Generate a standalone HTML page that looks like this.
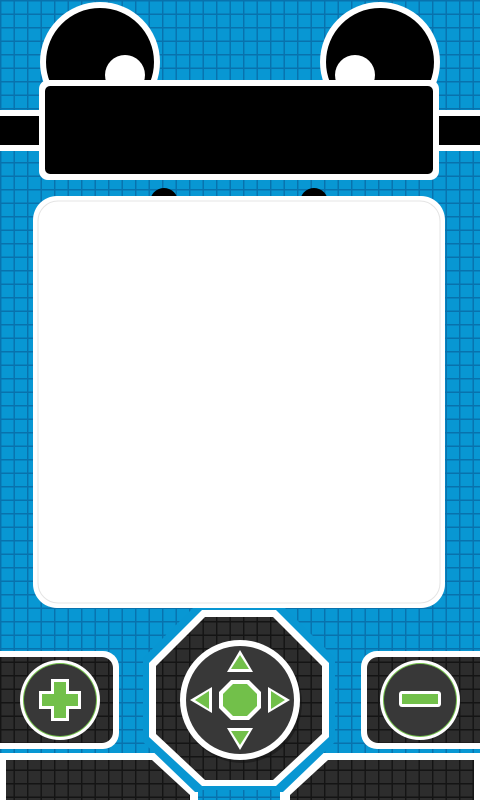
<!DOCTYPE html>
<html><head><meta charset="utf-8"><style>html,body{margin:0;padding:0;width:480px;height:800px;overflow:hidden;background:#0896d2}</style></head><body>
<svg width="480" height="800" viewBox="0 0 480 800" xmlns="http://www.w3.org/2000/svg">
<defs>
<pattern id="bg" width="13.5" height="13.5" patternUnits="userSpaceOnUse">
<rect width="13.5" height="13.5" fill="#0897d3"/>
<path d="M0 0.7H13.5M0.7 0V13.5" stroke="#0872ad" stroke-width="1.5"/>
</pattern>
<pattern id="dk" width="13.5" height="13.5" patternUnits="userSpaceOnUse">
<rect width="13.5" height="13.5" fill="#2d2d2d"/>
<path d="M0 0.7H13.5M0.7 0V13.5" stroke="#141414" stroke-width="1.5"/>
</pattern>
</defs>
<rect width="480" height="800" fill="url(#bg)"/>
<!-- ears -->
<circle cx="100" cy="62" r="60" fill="#fff"/><circle cx="100" cy="62" r="54" fill="#000"/>
<circle cx="125" cy="75" r="20" fill="#fff"/>
<circle cx="380" cy="62" r="60" fill="#fff"/><circle cx="380" cy="62" r="54" fill="#000"/>
<circle cx="355" cy="75" r="20" fill="#fff"/>
<!-- side bar -->
<rect x="0" y="110" width="480" height="41" fill="#fff"/>
<rect x="0" y="116" width="480" height="29" fill="#000"/>
<!-- head box -->
<rect x="39" y="80" width="400" height="100" rx="9" fill="#fff"/>
<rect x="45" y="86" width="388" height="88" rx="5" fill="#000"/>
<!-- bumps -->
<circle cx="164" cy="202" r="14" fill="#000"/><circle cx="314" cy="202" r="14" fill="#000"/>
<!-- bottom bar -->
<polygon points="0,753 158,753 198,790 280,790 320,753 480,753 480,800 0,800" fill="#fff"/>
<polygon points="6,760 152,760 190,795 190,800 6,800" fill="url(#dk)"/>
<polygon points="474,760 328,760 290,795 290,800 474,800" fill="url(#dk)"/>
<polygon points="197,604 281,604 335,658 335,742 283,792 195,792 143,742 143,658" fill="#0896d2"/>
<rect x="198" y="790" width="82" height="10" fill="url(#bg)"/>
<!-- screen -->
<rect x="33" y="196" width="412" height="412" rx="24" fill="#fff"/>
<rect x="38" y="201" width="402" height="402" rx="20" fill="none" stroke="#e4e4e4" stroke-width="1"/>
<!-- octagon -->
<polygon points="202,610 276,610 329,663 329,737 276,786 202,786 149,737 149,663" fill="#fff"/>
<polygon points="205,617 273,617 322,666 322,734 273,780 205,780 156,734 156,666" fill="url(#dk)"/>
<circle cx="242" cy="703" r="60" fill="#111" opacity=".5"/>
<circle cx="240" cy="700" r="60" fill="#fff"/>
<circle cx="240" cy="700" r="54" fill="#383838"/>
<polygon points="231,680 249,680 261,692 261,708 249,720 231,720 219,708 219,692" fill="#fff"/>
<polygon points="233,684 247,684 257,694 257,706 247,716 233,716 223,706 223,694" fill="#72c04a"/>
<polygon points="240,650 253,672 227,672" fill="#fff"/><polygon points="240,655 249,669 231,669" fill="#72c04a"/>
<polygon points="240,750 253,728 227,728" fill="#fff"/><polygon points="240,745 249,731 231,731" fill="#72c04a"/>
<polygon points="190,700 212,687 212,713" fill="#fff"/><polygon points="195,700 209,691 209,709" fill="#72c04a"/>
<polygon points="290,700 268,687 268,713" fill="#fff"/><polygon points="285,700 271,691 271,709" fill="#72c04a"/>
<!-- left button -->
<rect x="-20" y="651" width="139" height="98" rx="16" fill="#fff"/>
<rect x="-20" y="657" width="133" height="86" rx="11" fill="url(#dk)"/>
<circle cx="60" cy="700" r="40" fill="#fff"/><circle cx="60" cy="700" r="37" fill="#72c04a"/><circle cx="60" cy="700" r="36" fill="#383838"/>
<path d="M51 679h18v12h12v18h-12v12h-18v-12h-12v-18h12z" fill="#fff"/>
<path d="M54 682h12v12h12v12h-12v12h-12v-12h-12v-12h12z" fill="#72c04a"/>
<!-- right button -->
<rect x="361" y="651" width="139" height="98" rx="16" fill="#fff"/>
<rect x="367" y="657" width="133" height="86" rx="11" fill="url(#dk)"/>
<circle cx="420" cy="700" r="40" fill="#fff"/><circle cx="420" cy="700" r="37" fill="#72c04a"/><circle cx="420" cy="700" r="36" fill="#383838"/>
<rect x="399" y="691" width="42" height="16" rx="3" fill="#fff"/>
<rect x="402" y="694" width="36" height="10" fill="#72c04a"/>
</svg>
</body></html>
